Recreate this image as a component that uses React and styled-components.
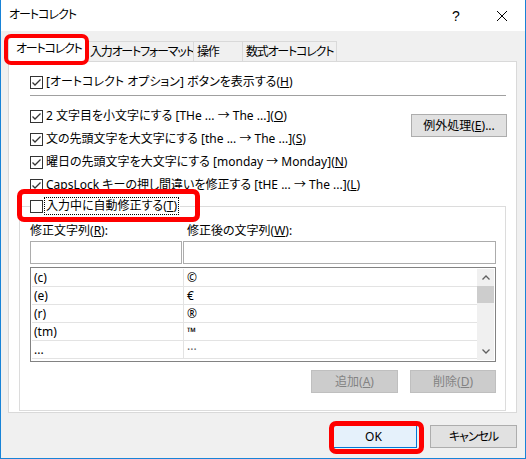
import React from "react";
import styled, { createGlobalStyle } from "styled-components";

const Global = createGlobalStyle`
  html, body { margin: 0; padding: 0; background: #ffffff; overflow: hidden; }
  * { box-sizing: border-box; }
  body {
    font-family: "Noto Sans", "Noto Sans CJK JP", sans-serif;
    font-size: 12px;
    color: #000;
  }
`;

const Window = styled.div`
  position: relative;
  width: 526px;
  height: 459px;
  border: 1px solid #1883d7;
  border-top: none;
  background: #f0f0f0;
  display: flex;
  flex-direction: column;
  font-feature-settings: "palt" 1;
  font-kerning: normal;
`;

const TitleBar = styled.div`
  height: 31px;
  background: #ffffff;
  display: flex;
  align-items: center;
  padding-left: 8px;
  flex: none;
`;

const Title = styled.div`
  flex: 1;
  line-height: 16px;
  margin-top: -1px;
  letter-spacing: -1px;
`;

const CaptionButton = styled.div`
  width: 46px;
  height: 31px;
  display: flex;
  align-items: center;
  justify-content: center;
  font-size: 14px;
  font-family: "Liberation Sans", sans-serif;
`;

const Body = styled.div`
  flex: 1;
  display: flex;
  flex-direction: column;
  padding: 0 8px 0 7px;
`;

const TabStrip = styled.div`
  height: 30px;
  display: flex;
  align-items: flex-end;
  flex: none;
`;

const Tab = styled.div`
  position: relative;
  width: ${(p) => p.$w}px;
  height: ${(p) => (p.$active ? 25 : 20)}px;
  margin-left: ${(p) => (p.$first ? 0 : -1)}px;
  margin-bottom: ${(p) => (p.$active ? -1 : 0)}px;
  z-index: ${(p) => (p.$active ? 2 : 1)};
  background: ${(p) => (p.$active ? "#ffffff" : "#f0f0f0")};
  border: 1px solid #d9d9d9;
  border-bottom: none;
  display: flex;
  align-items: center;
  padding-left: ${(p) => (p.$active ? 7 : 3)}px;
  padding-bottom: ${(p) => (p.$active ? 2 : 0)}px;
  white-space: nowrap;
  overflow: hidden;
  line-height: 16px;
  letter-spacing: -1.2px;
`;

const Panel = styled.div`
  width: 509px;
  height: 352px;
  background: #ffffff;
  border: 1px solid #d9d9d9;
  padding: 0 10px;
  display: flex;
  flex-direction: column;
  flex: none;
`;

const TopSection = styled.div`
  padding-left: 11px;
  display: flex;
  flex-direction: column;
`;

const CheckRow = styled.label`
  height: 18px;
  display: flex;
  align-items: center;
  gap: 3px;
  white-space: nowrap;
  line-height: 16px;
  margin-top: ${(p) => p.$mt || 0}px;
`;

const Separator = styled.div`
  height: 1px;
  background: #a0a0a0;
  margin-top: 4px;
`;

const OptionsArea = styled.div`
  display: flex;
  justify-content: space-between;
  margin-top: 11px;
`;

const OptionList = styled.div`
  display: flex;
  flex-direction: column;
  gap: 5px;
`;

const Button = styled.div`
  width: ${(p) => p.$w}px;
  height: 23px;
  background: ${(p) => (p.$disabled ? "#cccccc" : p.$default ? "#e5f1fb" : "#e1e1e1")};
  border: 1px solid ${(p) => (p.$disabled ? "#bfbfbf" : p.$default ? "#0078d7" : "#adadad")};
  color: ${(p) => (p.$disabled ? "#838383" : "#000")};
  display: flex;
  align-items: center;
  justify-content: center;
  white-space: nowrap;
  line-height: 16px;
  letter-spacing: ${(p) => p.$ls || 0}px;
  flex: none;
`;

const ExceptionButton = styled(Button)`
  margin-top: 7px;
  margin-right: -1px;
`;

const GroupBox = styled.fieldset`
  margin: 3px 0 0 0;
  padding: 7px 9px 7px 10px;
  border: 1px solid #dcdcdc;
  min-width: 0;
  height: 214px;
`;

const Legend = styled.legend`
  padding: 0 2px 0 0;
  margin: 0;
  height: 18px;
  display: flex;
  align-items: center;
  gap: 2px;
  white-space: nowrap;
  line-height: 16px;
`;

const FocusText = styled.span`
  outline: 1px dotted #000;
  outline-offset: 0px;
  padding: 0 1px;
`;

const FieldGrid = styled.div`
  display: grid;
  grid-template-columns: 152px 1fr;
  column-gap: 1px;
`;

const FieldLabel = styled.div`
  height: 18px;
  line-height: 18px;
  padding-left: ${(p) => p.$pl || 0}px;
  white-space: nowrap;
`;

const TextBox = styled.div`
  height: 23px;
  margin-top: 1px;
  border: 1px solid #acacac;
  background: #fff;
`;

const List = styled.div`
  margin-top: 3px;
  height: 95px;
  border: 1px solid #828282;
  padding: 1px;
  display: flex;
`;

const ListBody = styled.div`
  flex: 1;
  display: flex;
  flex-direction: column;
`;

const ListRow = styled.div`
  height: 18px;
  display: grid;
  grid-template-columns: 151px 1fr;
  border-bottom: 1px solid #e3e3e3;
`;

const Cell = styled.div`
  padding-left: ${(p) => p.$pl}px;
  line-height: 17px;
  border-left: ${(p) => (p.$divider ? "1px solid #e3e3e3" : "none")};
  font-family: "Noto Sans", "DejaVu Sans", sans-serif;
  color: ${(p) => p.$color || "#000"};
  white-space: nowrap;
`;

const ScrollBar = styled.div`
  width: 17px;
  background: #f0f0f0;
  display: flex;
  flex-direction: column;
`;

const ScrollArrow = styled.div`
  height: 17px;
  display: flex;
  align-items: center;
  justify-content: center;
`;

const ScrollThumb = styled.div`
  height: 17px;
  background: #cdcdcd;
`;

const ScrollTrack = styled.div`
  flex: 1;
`;

const ButtonRow = styled.div`
  display: flex;
  justify-content: flex-end;
  gap: 12px;
  margin-top: 8px;
`;

const Footer = styled.div`
  display: flex;
  justify-content: flex-end;
  gap: 13px;
  margin-top: 12px;
`;

const Highlight = styled.div`
  position: absolute;
  left: ${(p) => p.$x}px;
  top: ${(p) => p.$y}px;
  width: ${(p) => p.$w}px;
  height: ${(p) => p.$h}px;
  border: ${(p) => p.$t}px solid #ff0000;
  border-radius: 7px;
  pointer-events: none;
  z-index: 10;
`;

const CheckBoxIcon = ({ checked }) => (
  <svg width="13" height="13" viewBox="0 0 13 13" style={{ flex: "none" }}>
    <rect x="0.5" y="0.5" width="12" height="12" fill="#fff" stroke="#333" />
    {checked && (
      <path d="M2.5 6.5 L5 9 L10.5 3.5" fill="none" stroke="#333" strokeWidth="1.3" />
    )}
  </svg>
);

const Chevron = ({ up }) => (
  <svg width="8" height="5" viewBox="0 0 8 5">
    <path
      d={up ? "M0.5 4.5 L4 1 L7.5 4.5" : "M0.5 0.5 L4 4 L7.5 0.5"}
      fill="none"
      stroke="#606060"
      strokeWidth="1.3"
    />
  </svg>
);

const Mn = ({ pre, k, post }) => (
  <span>
    {pre}(<u>{k}</u>){post}
  </span>
);

const rows = [
  ["(c)", "©"],
  ["(e)", "€"],
  ["(r)", "®"],
  ["(tm)", "™"],
  ["...", "···"],
];

export default function App() {
  return (
    <>
      <Global />
      <Window>
        <TitleBar>
          <Title>オートコレクト</Title>
          <CaptionButton>?</CaptionButton>
          <CaptionButton>
            <svg width="10" height="10" viewBox="0 0 10 10">
              <path d="M0 0 L10 10 M10 0 L0 10" stroke="#000" strokeWidth="1" />
            </svg>
          </CaptionButton>
        </TitleBar>
        <Body>
          <TabStrip>
            <Tab $w={79} $active $first>オートコレクト</Tab>
            <Tab $w={108}>入力オートフォーマット</Tab>
            <Tab $w={50}>操作</Tab>
            <Tab $w={95}>数式オートコレクト</Tab>
          </TabStrip>
          <Panel>
            <TopSection>
              <CheckRow $mt={11}>
                <CheckBoxIcon checked />
                <Mn pre="[オートコレクト オプション] ボタンを表示する" k="H" />
              </CheckRow>
              <Separator />
              <OptionsArea>
                <OptionList>
                  <CheckRow>
                    <CheckBoxIcon checked />
                    <Mn pre="2 文字目を小文字にする [THe ... → The ...]" k="O" />
                  </CheckRow>
                  <CheckRow>
                    <CheckBoxIcon checked />
                    <Mn pre="文の先頭文字を大文字にする [the ... → The ...]" k="S" />
                  </CheckRow>
                  <CheckRow>
                    <CheckBoxIcon checked />
                    <Mn pre="曜日の先頭文字を大文字にする [monday → Monday]" k="N" />
                  </CheckRow>
                  <CheckRow>
                    <CheckBoxIcon checked />
                    <Mn pre="CapsLock キーの押し間違いを修正する [tHE ... → The ...]" k="L" />
                  </CheckRow>
                </OptionList>
                <ExceptionButton $w={96}>
                  <Mn pre="例外処理" k="E" post="..." />
                </ExceptionButton>
              </OptionsArea>
            </TopSection>
            <GroupBox>
              <Legend>
                <CheckBoxIcon />
                <FocusText>
                  <Mn pre="入力中に自動修正する" k="T" />
                </FocusText>
              </Legend>
              <FieldGrid>
                <FieldLabel>
                  <Mn pre="修正文字列" k="R" post=":" />
                </FieldLabel>
                <FieldLabel $pl={4}>
                  <Mn pre="修正後の文字列" k="W" post=":" />
                </FieldLabel>
                <TextBox />
                <TextBox />
              </FieldGrid>
              <List>
                <ListBody>
                  {rows.map(([a, b], i) => (
                    <ListRow key={i}>
                      <Cell $pl={2}>{a}</Cell>
                      <Cell $pl={3} $divider $color={i === 4 ? "#666" : "#000"}>
                        {b}
                      </Cell>
                    </ListRow>
                  ))}
                </ListBody>
                <ScrollBar>
                  <ScrollArrow>
                    <Chevron up />
                  </ScrollArrow>
                  <ScrollThumb />
                  <ScrollTrack />
                  <ScrollArrow>
                    <Chevron />
                  </ScrollArrow>
                </ScrollBar>
              </List>
              <ButtonRow>
                <Button $w={87} $disabled>
                  <Mn pre="追加" k="A" />
                </Button>
                <Button $w={86} $disabled>
                  <Mn pre="削除" k="D" />
                </Button>
              </ButtonRow>
            </GroupBox>
          </Panel>
          <Footer>
            <Button $w={87} $default>OK</Button>
            <Button $w={87} $ls={-1}>キャンセル</Button>
          </Footer>
        </Body>
        <Highlight $x={3} $y={34} $w={85} $h={31} $t={4} />
        <Highlight $x={16} $y={189} $w={183} $h={33} $t={5} />
        <Highlight $x={328} $y={421} $w={95} $h={33} $t={5} />
      </Window>
    </>
  );
}
